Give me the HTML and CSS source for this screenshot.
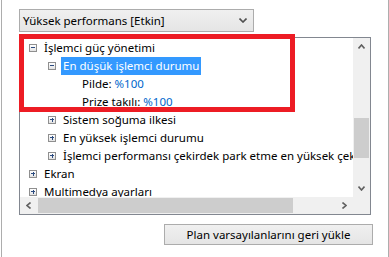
FILE: index.html
```html
<!DOCTYPE html>
<html lang="tr">
<head>
    <meta charset="UTF-8">
    <title>Gelişmiş ayarlar</title>
    <link rel="stylesheet" href="styles.css">
</head>
<body>
    <div class="panel">
        <div class="plan-select">
            <span>Yüksek performans [Etkin]</span>
            <svg class="chev" width="8" height="5" viewBox="0 0 8 5"><path d="M0.5 0.5 L4 4 L7.5 0.5" fill="none" stroke="#505050" stroke-width="1.6"/></svg>
        </div>

        <div class="tree-wrap">
            <div class="tree">
                <div class="tree-items">
                    <div class="row lvl0"><span class="exp minus"></span><span class="label">İşlemci güç yönetimi</span></div>
                    <div class="row lvl1"><span class="exp minus"></span><span class="label selected">En düşük işlemci durumu</span></div>
                    <div class="row lvl2"><span class="exp"></span><span class="label">Pilde: <a class="val">%100</a></span></div>
                    <div class="row lvl2"><span class="exp"></span><span class="label">Prize takılı: <a class="val">%100</a></span></div>
                    <div class="row lvl1"><span class="exp plus"></span><span class="label">Sistem soğuma ilkesi</span></div>
                    <div class="row lvl1"><span class="exp plus"></span><span class="label">En yüksek işlemci durumu</span></div>
                    <div class="row lvl1"><span class="exp plus"></span><span class="label">İşlemci performansı çekirdek park etme en yüksek çekirdek sayısı</span></div>
                    <div class="row lvl0"><span class="exp plus"></span><span class="label">Ekran</span></div>
                    <div class="row lvl0"><span class="exp plus"></span><span class="label">Multimedya ayarları</span></div>
                </div>
                <div class="vscroll">
                    <div class="sbtn"><svg width="7" height="5" viewBox="0 0 7 5"><path d="M0.5 4.5 L3.5 1 L6.5 4.5" fill="none" stroke="#606060" stroke-width="1.6"/></svg></div>
                    <div class="vtrack"><div class="vthumb"></div></div>
                    <div class="sbtn"><svg width="7" height="5" viewBox="0 0 7 5"><path d="M0.5 0.5 L3.5 4 L6.5 0.5" fill="none" stroke="#606060" stroke-width="1.6"/></svg></div>
                </div>
                <div class="hscroll">
                    <div class="sbtn"><svg width="5" height="7" viewBox="0 0 5 7"><path d="M4.5 0.5 L1 3.5 L4.5 6.5" fill="none" stroke="#606060" stroke-width="1.6"/></svg></div>
                    <div class="htrack"><div class="hthumb"></div></div>
                    <div class="sbtn"><svg width="5" height="7" viewBox="0 0 5 7"><path d="M0.5 0.5 L4 3.5 L0.5 6.5" fill="none" stroke="#606060" stroke-width="1.6"/></svg></div>
                </div>
                <div class="corner"></div>
            </div>
            <!-- işaretleme çerçevesi -->
            <div class="mark"></div>
        </div>

        <div class="actions">
            <button class="restore">Plan varsayılanlarını geri yükle</button>
        </div>
    </div>
</body>
</html>
```

FILE: styles.css
```css
* { margin: 0; padding: 0; box-sizing: border-box; }
body { background: #fff; font-family: 'Noto Sans', 'Open Sans', sans-serif; font-size: 11.5px; color: #000; width: 389px; height: 257px; overflow: hidden; }
.panel { margin-left: 1px; width: 388px; height: 257px; border-left: 1px solid #adadad; border-right: 1px solid #adadad; padding: 9px 15px 0 17px; }

.plan-select { width: 235px; height: 23px; border: 1px solid #acacac; background: linear-gradient(#f0f0f0, #e5e5e5); display: flex; align-items: center; justify-content: space-between; padding: 0 6px 0 3px; }
.plan-select span { line-height: 20px; }

.tree-wrap { position: relative; margin-top: 5px; width: 352px; }
.tree { height: 178px; border: 1px solid #828790; display: grid; grid-template-columns: 1fr 17px; grid-template-rows: 1fr 17px; }
.tree-items { overflow: hidden; padding-top: 1px; }
.row { height: 18px; display: flex; align-items: center; white-space: nowrap; }
.row.lvl0 { padding-left: 9px; }
.row.lvl1 { padding-left: 28px; }
.row.lvl2 { padding-left: 47px; }
.exp { width: 8px; height: 8px; flex: none; margin-right: 5px; position: relative; }
.exp.minus, .exp.plus { border: 1px solid #8f8f8f; background: linear-gradient(#fff, #e3e3e3); }
.exp.minus::before, .exp.plus::before { content: ''; position: absolute; left: 1px; top: 2px; width: 4px; height: 1px; background: #2b4b80; }
.exp.plus::after { content: ''; position: absolute; left: 2.5px; top: 0.5px; width: 1px; height: 4px; background: #2b4b80; }
.label { height: 18px; line-height: 18px; padding: 0 2px; }
.label.selected { background: #3399ff; color: #fff; }
.val { color: #0066cc; }

.vscroll { background: #f0f0f0; display: flex; flex-direction: column; }
.vscroll .sbtn { height: 17px; display: flex; align-items: center; justify-content: center; flex: none; }
.vtrack { flex: 1; padding-top: 63px; }
.vthumb { height: 40px; margin: 0 1px; background: #cdcdcd; }
.hscroll { background: #f0f0f0; display: flex; }
.hscroll .sbtn { width: 17px; display: flex; align-items: center; justify-content: center; flex: none; }
.htrack { flex: 1; padding: 1px 0; }
.hthumb { width: 255px; height: 15px; margin-left: 1px; background: #cdcdcd; }
.corner { background: #f0f0f0; }

.mark { position: absolute; left: 0; top: -3px; width: 276px; height: 78px; border: 5px solid #ed1c24; }

.actions { display: flex; justify-content: flex-end; margin-top: 9px; }
.restore { width: 209px; height: 21px; border: 1px solid #acacac; background: linear-gradient(#f0f0f0, #e5e5e5); font-family: inherit; font-size: 11.5px; color: #000; }
```
